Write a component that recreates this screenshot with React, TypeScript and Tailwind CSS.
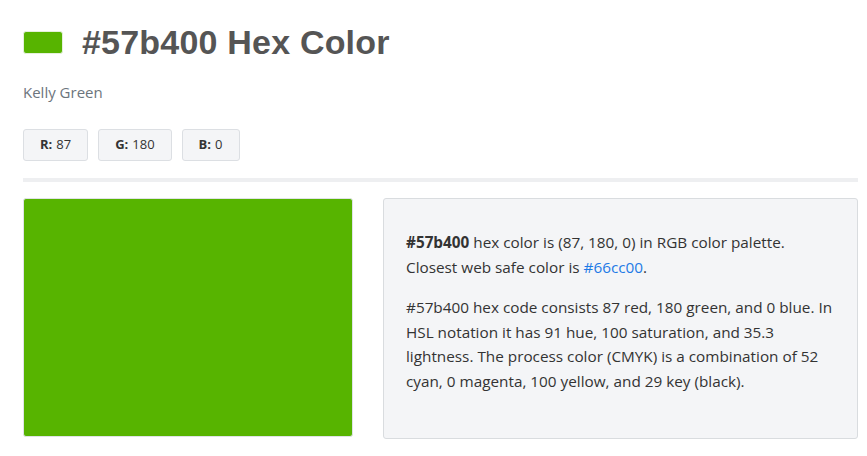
export default function App() {
    const channels = [
        { label: "R:", value: "87" },
        { label: "G:", value: "180" },
        { label: "B:", value: "0" },
    ];

    return (
        <main className="bg-white min-h-[456px] pl-[23px] pr-[9px] pt-[30px] font-['Open_Sans',sans-serif]">
            {/* title */}
            <div className="flex items-center h-[24px]">
                <div className="w-[40px] h-[23px] rounded-[3px] bg-[#57b400] border border-[#e5f0dc]" />
                <h1 className="ml-[19px] text-[34px] leading-none font-bold text-[#555] font-['Liberation_Sans',Arial,sans-serif] tracking-[0.2px]">
                    #57b400 Hex Color
                </h1>
            </div>
            <p className="mt-[28px] text-[15px] text-[#6c757d] leading-5">Kelly Green</p>

            {/* rgb badges */}
            <div className="flex gap-[10px] mt-[27px]">
                {channels.map((c) => (
                    <div
                        key={c.label}
                        className="h-[32px] px-[16px] flex items-center bg-[#f4f5f7] border border-[#dcdfe3] rounded-[3px] text-[13px] text-[#333]"
                    >
                        <span className="font-bold">{c.label}</span>
                        <span className="ml-[4px]">{c.value}</span>
                    </div>
                ))}
            </div>

            <div className="h-[4px] bg-[#eeeff1] mt-[17px]" />

            {/* swatch + description */}
            <div className="grid grid-cols-[330px_1fr] gap-[30px] mt-[16px]">
                <div className="h-[239px] bg-[#57b400] rounded-[3px] border border-[#dfe3e6]" />
                <div className="h-[241px] bg-[#f4f5f7] border border-[#d9dcdf] rounded-[3px] pl-[22px] pr-[18px] pt-[31px] text-[15.3px] leading-[24.5px] text-[#333]">
                    <p>
                        <span className="font-bold">#57b400</span> hex color is (87, 180, 0) in RGB color palette.
                        Closest web safe color is <a href="#" className="text-[#1e7ae6]">#66cc00</a>.
                    </p>
                    <p className="mt-[16px]">
                        #57b400 hex code consists 87 red, 180 green, and 0 blue. In HSL notation it has 91 hue, 100
                        saturation, and 35.3 lightness. The process color (CMYK) is a combination of 52 cyan, 0 magenta,
                        100 yellow, and 29 key (black).
                    </p>
                </div>
            </div>
        </main>
    );
}
